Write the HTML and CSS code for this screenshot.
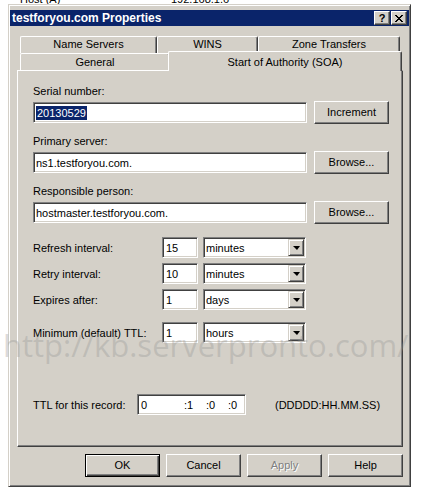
FILE: index.html
```html
<!DOCTYPE html>
<html>
  <head>
    <meta charset="utf-8">
    <title>testforyou.com Properties</title>
    <link rel="stylesheet" href="styles.css">
  </head>

  <body>
    <!-- list row of the DNS console, mostly hidden behind the dialog -->
    <div class="backdrop">
      <div class="backdrop-row">
        <span class="backdrop-name">Host (A)</span>
        <span>192.168.1.6</span>
      </div>
    </div>

    <div class="dialog">
      <div class="titlebar">
        <span class="title">testforyou.com Properties</span>
        <div class="caption-buttons">
          <span class="caption-btn">?</span>
          <span class="caption-btn">
            <svg width="8" height="7" viewBox="0 0 8 7" shape-rendering="crispEdges">
              <rect x="0" y="0" width="2" height="1" />
              <rect x="6" y="0" width="2" height="1" />
              <rect x="1" y="1" width="2" height="1" />
              <rect x="5" y="1" width="2" height="1" />
              <rect x="2" y="2" width="4" height="1" />
              <rect x="3" y="3" width="2" height="1" />
              <rect x="2" y="4" width="4" height="1" />
              <rect x="1" y="5" width="2" height="1" />
              <rect x="5" y="5" width="2" height="1" />
              <rect x="0" y="6" width="2" height="1" />
              <rect x="6" y="6" width="2" height="1" />
            </svg>
          </span>
        </div>
      </div>

      <div class="tabstrip">
        <div class="tab-row">
          <div class="tab tab-name">Name Servers</div>
          <div class="tab tab-wins">WINS</div>
          <div class="tab tab-zone">Zone Transfers</div>
        </div>
        <div class="tab-row">
          <div class="tab tab-general">General</div>
          <div class="tab tab-soa selected">Start of Authority (SOA)</div>
        </div>
      </div>

      <div class="panel">
        <div class="field">
          <div class="label">Serial number:</div>
          <div class="field-row">
            <div class="edit wide"><span class="selection">20130529</span></div>
            <div class="button">Increment</div>
          </div>
        </div>
        <div class="field">
          <div class="label">Primary server:</div>
          <div class="field-row">
            <div class="edit wide">ns1.testforyou.com.</div>
            <div class="button">Browse...</div>
          </div>
        </div>
        <div class="field">
          <div class="label">Responsible person:</div>
          <div class="field-row">
            <div class="edit wide">hostmaster.testforyou.com.</div>
            <div class="button">Browse...</div>
          </div>
        </div>

        <div class="intervals">
          <div class="interval-row">
            <span class="interval-label">Refresh interval:</span>
            <div class="edit number">15</div>
            <div class="combo">
              <span class="combo-text">minutes</span>
              <span class="combo-btn"><span class="arrow"></span></span>
            </div>
          </div>
          <div class="interval-row">
            <span class="interval-label">Retry interval:</span>
            <div class="edit number">10</div>
            <div class="combo">
              <span class="combo-text">minutes</span>
              <span class="combo-btn"><span class="arrow"></span></span>
            </div>
          </div>
          <div class="interval-row">
            <span class="interval-label">Expires after:</span>
            <div class="edit number">1</div>
            <div class="combo">
              <span class="combo-text">days</span>
              <span class="combo-btn"><span class="arrow"></span></span>
            </div>
          </div>
          <div class="interval-row minimum">
            <span class="interval-label">Minimum (default) TTL:</span>
            <div class="edit number">1</div>
            <div class="combo">
              <span class="combo-text">hours</span>
              <span class="combo-btn"><span class="arrow"></span></span>
            </div>
          </div>
        </div>

        <div class="ttl-row">
          <span class="ttl-label">TTL for this record:</span>
          <div class="edit ttl">
            <span class="ttl-days">0</span>
            <span class="ttl-part">:1</span>
            <span class="ttl-part">:0</span>
            <span>:0</span>
          </div>
          <span class="ttl-format">(DDDDD:HH.MM.SS)</span>
        </div>
      </div>

      <div class="footer">
        <div class="button default">OK</div>
        <div class="button">Cancel</div>
        <div class="button disabled">Apply</div>
        <div class="button">Help</div>
      </div>
    </div>

    <div class="watermark">http://kb.serverpronto.com/</div>
  </body>
</html>
```

FILE: styles.css
```css
body {
  margin: 0;
  width: 426px;
  height: 503px;
  overflow: hidden;
  position: relative;
  background: #fff;
  font-family: "Liberation Sans", Arial, sans-serif;
  font-size: 11px;
  color: #000;
}

/* console list behind the dialog */
.backdrop {
  height: 4px;
  overflow: hidden;
}
.backdrop-row {
  display: flex;
  margin-top: -7px;
  padding-left: 20px;
  line-height: 13px;
}
.backdrop-name {
  width: 151px;
}

.dialog {
  box-sizing: border-box;
  width: 403px;
  height: 483px;
  margin-left: 8px;
  padding: 5px 1px 0;
  background: #d4d0c8;
  border: 1px solid;
  border-color: #d4d0c8 #404040 #404040 #d4d0c8;
  box-shadow: inset 1px 1px #fff, inset -1px -1px #808080;
}

.titlebar {
  height: 16px;
  display: flex;
  align-items: center;
  justify-content: space-between;
  padding: 0 2px;
  background: #0a246a;
  color: #fff;
}
.title {
  font-weight: bold;
  font-size: 12px;
}
.caption-buttons {
  display: flex;
  gap: 1px;
}
.caption-btn {
  box-sizing: border-box;
  width: 16px;
  height: 14px;
  display: flex;
  align-items: center;
  justify-content: center;
  background: #d4d0c8;
  border: 1px solid;
  border-color: #fff #404040 #404040 #fff;
  box-shadow: inset -1px -1px #808080;
  color: #000;
  font-weight: bold;
  font-size: 11px;
}

/* tabs */
.tabstrip {
  margin: 10px 0 0 7px;
}
.tab-row {
  display: flex;
  height: 17px;
  padding-left: 3px;
}
.tab {
  box-sizing: border-box;
  height: 17px;
  line-height: 15px;
  text-align: center;
  background: #d4d0c8;
  border-top: 1px solid #fff;
  border-left: 1px solid #fff;
  border-right: 1px solid #404040;
  border-top-left-radius: 2px;
  border-top-right-radius: 2px;
  box-shadow: inset -1px 0 #808080;
}
.tab-name { width: 137px; }
.tab-wins { width: 101px; }
.tab-zone { width: 142px; }
.tab-general {
  width: 150px;
  line-height: 17px;
}
.tab-soa { width: 230px; }
.tab.selected {
  position: relative;
  z-index: 1;
  width: 234px;
  height: 20px;
  margin: -2px -2px 0 -2px;
  line-height: 20px;
}

.panel {
  box-sizing: border-box;
  width: 386px;
  height: 377px;
  margin-left: 7px;
  padding: 14px 0 0 15px;
  border: 1px solid;
  border-color: #fff #404040 #404040 #fff;
  box-shadow: inset -1px -1px #808080;
}

.label {
  line-height: 13px;
  margin-bottom: 3px;
}
.field + .field {
  margin-top: 11px;
}
.field-row {
  display: flex;
  align-items: center;
  gap: 7px;
  height: 23px;
}

.edit {
  box-sizing: border-box;
  height: 21px;
  display: flex;
  align-items: center;
  padding-left: 2px;
  background: #fff;
  border: 1px solid;
  border-color: #808080 #fff #fff #808080;
  box-shadow: inset 1px 1px #404040, inset -1px -1px #d4d0c8;
  white-space: nowrap;
}
.edit.wide {
  width: 274px;
}
.edit.number {
  width: 36px;
  padding-left: 3px;
}
.selection {
  background: #0a246a;
  color: #fff;
  line-height: 14px;
  padding: 0 1px;
}

.button {
  box-sizing: border-box;
  width: 75px;
  height: 23px;
  line-height: 21px;
  text-align: center;
  background: #d4d0c8;
  border: 1px solid;
  border-color: #fff #404040 #404040 #fff;
  box-shadow: inset -1px -1px #808080;
}
.button.default {
  border-color: #000;
  box-shadow: inset 1px 1px #fff, inset -1px -1px #404040, inset -2px -2px #808080;
}
.button.disabled {
  color: #808080;
  text-shadow: 1px 1px #fff;
}

/* interval rows */
.intervals {
  margin-top: 13px;
  display: flex;
  flex-direction: column;
  gap: 5px;
}
.interval-row {
  display: flex;
  align-items: center;
  height: 21px;
}
.interval-row.minimum {
  margin-top: 7px;
}
.interval-label {
  width: 129px;
}
.combo {
  box-sizing: border-box;
  width: 103px;
  height: 21px;
  margin-left: 5px;
  display: flex;
  align-items: center;
  justify-content: space-between;
  padding: 0 1px 0 2px;
  background: #fff;
  border: 1px solid;
  border-color: #808080 #fff #fff #808080;
  box-shadow: inset 1px 1px #404040, inset -1px -1px #d4d0c8;
}
.combo-btn {
  box-sizing: border-box;
  width: 16px;
  height: 17px;
  display: flex;
  align-items: center;
  justify-content: center;
  background: #d4d0c8;
  border: 1px solid;
  border-color: #d4d0c8 #404040 #404040 #d4d0c8;
  box-shadow: inset 1px 1px #fff, inset -1px -1px #808080;
}
.arrow {
  width: 0;
  height: 0;
  border-left: 4px solid transparent;
  border-right: 3px solid transparent;
  border-top: 4px solid #000;
}

/* ttl */
.ttl-row {
  display: flex;
  align-items: center;
  height: 21px;
  margin-top: 51px;
}
.ttl-label {
  width: 104px;
}
.edit.ttl {
  width: 109px;
  padding-left: 3px;
}
.ttl-days {
  width: 43px;
}
.ttl-part {
  width: 22px;
}
.ttl-format {
  margin-left: 29px;
}

.footer {
  width: 386px;
  margin: 7px 0 0 7px;
  display: flex;
  justify-content: flex-end;
  gap: 6px;
}

/* site watermark stamped over the screenshot */
.watermark {
  position: absolute;
  left: 3px;
  top: 330px;
  font-family: "Open Sans", sans-serif;
  font-size: 31px;
  line-height: 31px;
  color: rgba(150, 150, 150, 0.35);
  white-space: nowrap;
}
```
